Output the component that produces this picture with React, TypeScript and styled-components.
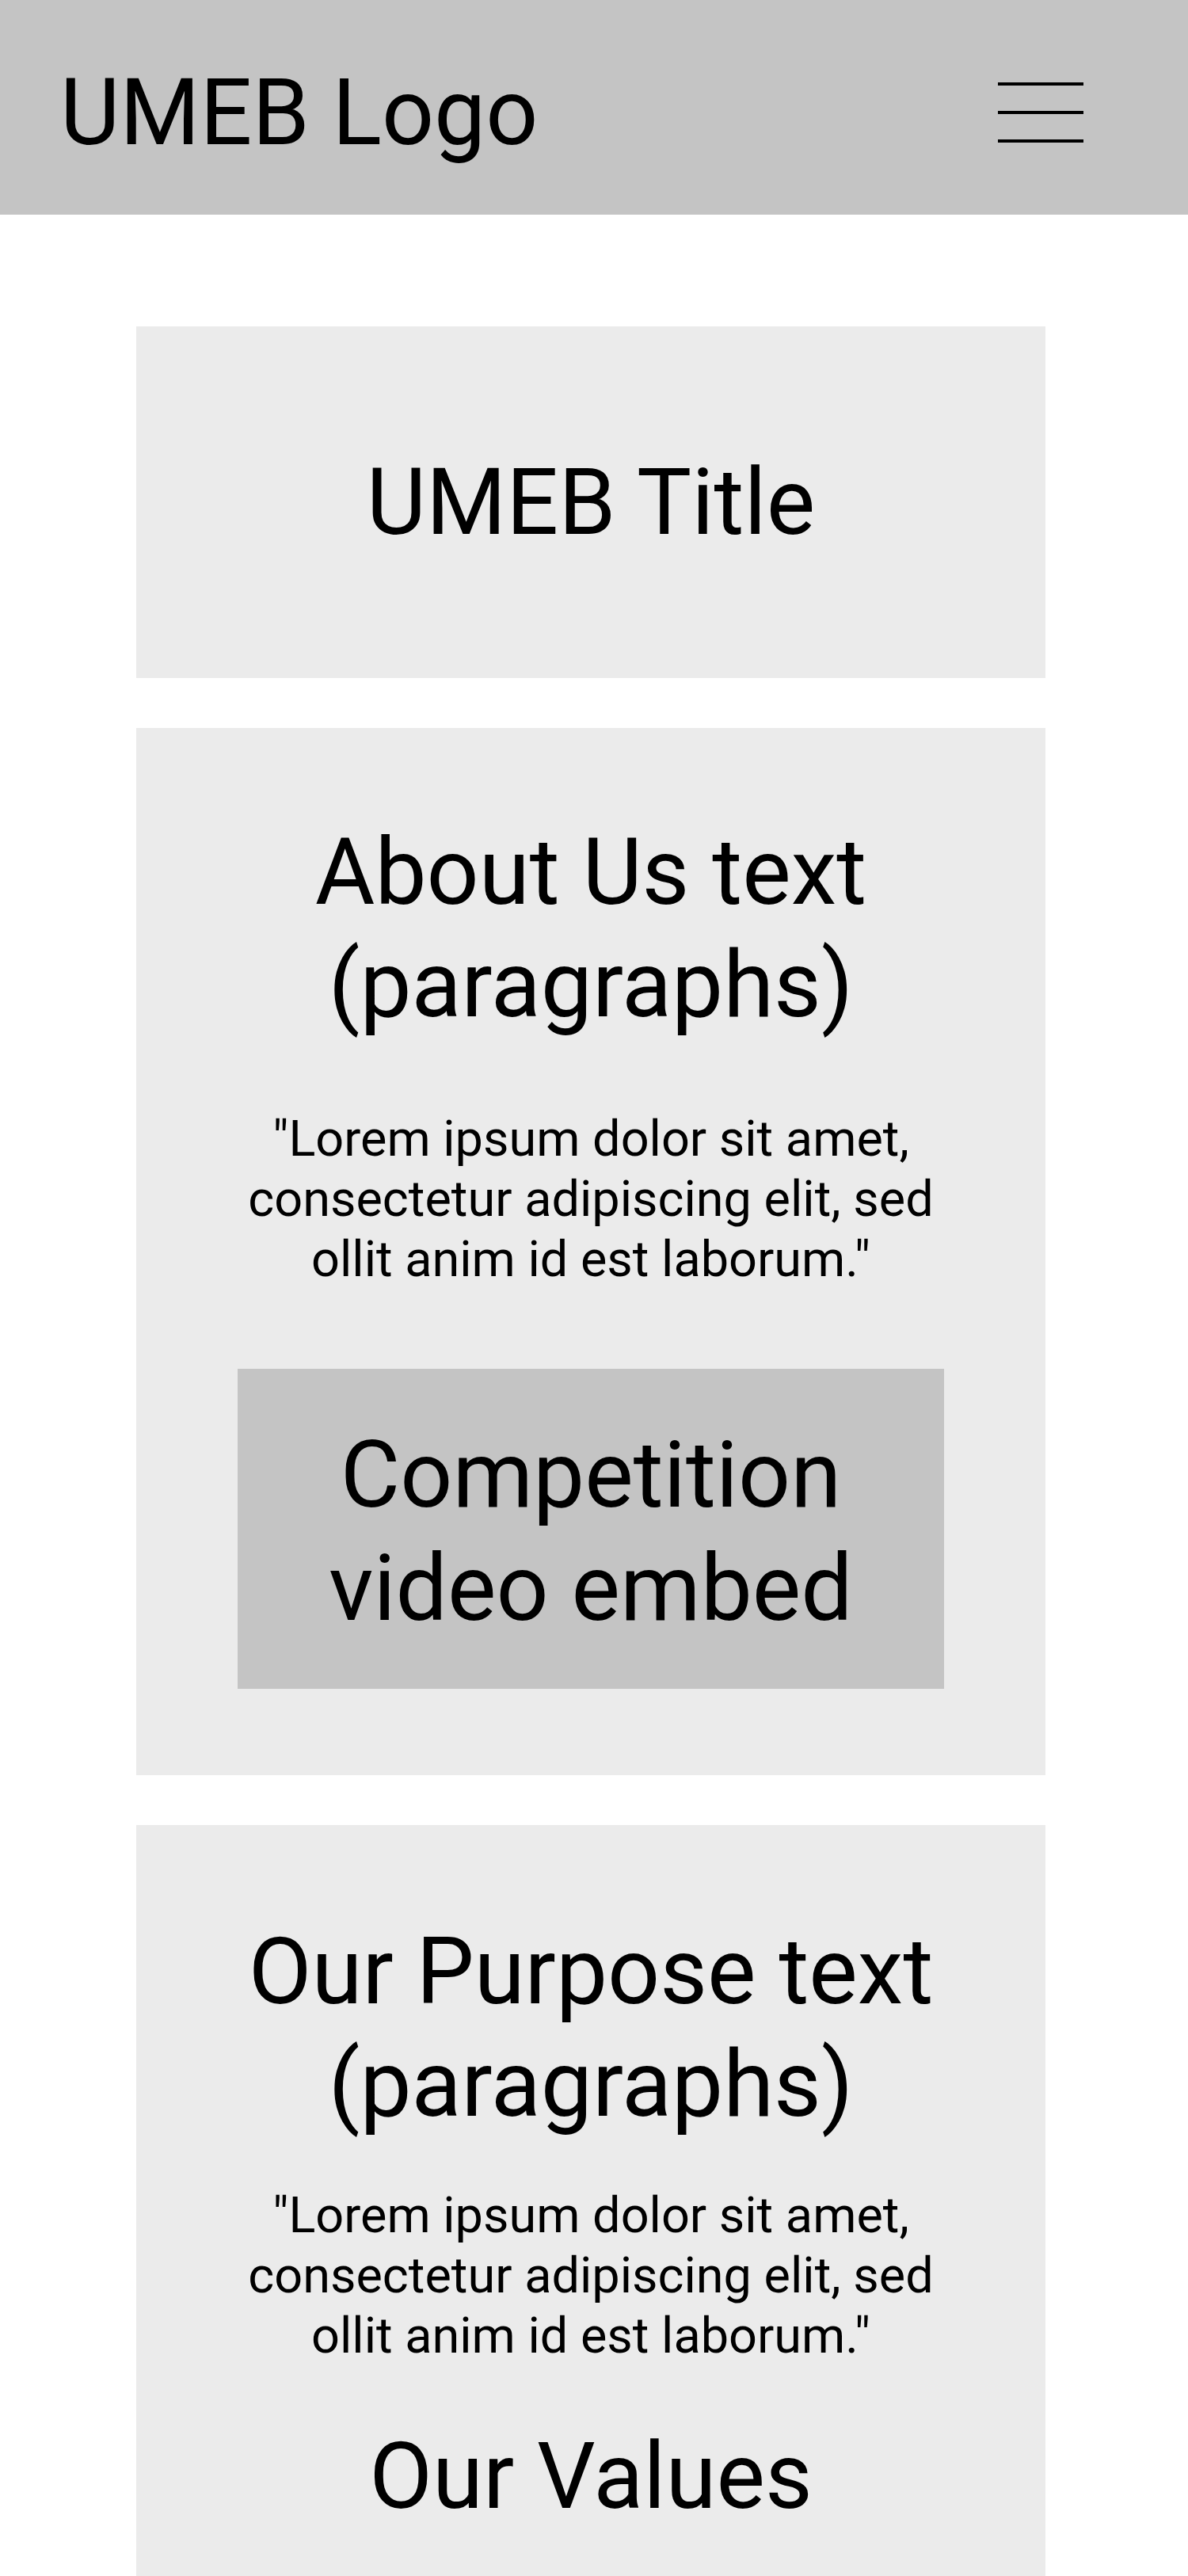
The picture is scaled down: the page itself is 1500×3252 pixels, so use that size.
import React from "react";
import styled, { createGlobalStyle } from "styled-components";

const GlobalStyle = createGlobalStyle`
    html, body {
        margin: 0;
        padding: 0;
        background: #ffffff;
    }
    body {
        font-family: Roboto, "Liberation Sans", Arial, sans-serif;
        color: #000000;
    }
    * {
        box-sizing: border-box;
    }
`;

const Header = styled.header`
    height: 271px;
    padding: 12px 132px 0 76px;
    background: #c4c4c4;
    display: flex;
    align-items: center;
    justify-content: space-between;
`;

const Logo = styled.div`
    font-size: 116px;
    line-height: 1;
    font-weight: 400;
`;

const MenuButton = styled.button`
    width: 108px;
    padding: 0;
    border: none;
    background: transparent;
    display: flex;
    flex-direction: column;
    gap: 32px;
    cursor: pointer;
`;

const MenuBar = styled.span`
    display: block;
    height: 4px;
    width: 100%;
    background: #000000;
`;

const Main = styled.main`
    width: 1148px;
    margin-left: 172px;
    padding-top: 141px;
    display: flex;
    flex-direction: column;
    gap: 63px;
`;

const Card = styled.section<{ $height?: number; $padTop?: number; $padBottom?: number }>`
    background: #ebebeb;
    display: flex;
    flex-direction: column;
    align-items: center;
    justify-content: ${(p) => (p.$height ? "center" : "flex-start")};
    text-align: center;
    height: ${(p) => (p.$height ? `${p.$height}px` : "auto")};
    padding-top: ${(p) => p.$padTop ?? 0}px;
    padding-bottom: ${(p) => p.$padBottom ?? 0}px;
`;

const Heading = styled.h2<{ $top?: number }>`
    margin: ${(p) => p.$top ?? 0}px 0 0;
    font-size: 116px;
    line-height: 142px;
    font-weight: 400;
`;

const Paragraph = styled.p<{ $top: number }>`
    margin: ${(p) => p.$top}px 0 0;
    width: 880px;
    font-size: 63px;
    line-height: 76px;
    font-weight: 400;
`;

const VideoEmbed = styled.div`
    margin-top: 100px;
    width: 892px;
    height: 404px;
    padding-top: 8px;
    background: #c4c4c4;
    display: flex;
    align-items: center;
    justify-content: center;
    font-size: 116px;
    line-height: 143px;
    text-align: center;
`;

const lorem = `"Lorem ipsum dolor sit amet, consectetur adipiscing elit, sed ollit anim id est laborum."`;

const App = () => {
    return (
        <>
            <GlobalStyle />
            <Header>
                <Logo>UMEB Logo</Logo>
                <MenuButton aria-label="Menu">
                    <MenuBar />
                    <MenuBar />
                    <MenuBar />
                </MenuButton>
            </Header>
            <Main>
                <Card $height={444}>
                    <Heading>UMEB Title</Heading>
                </Card>
                <Card $padTop={111} $padBottom={109}>
                    <Heading>
                        About Us text
                        <br />
                        (paragraphs)
                    </Heading>
                    <Paragraph $top={86}>{lorem}</Paragraph>
                    <VideoEmbed>
                        Competition
                        <br />
                        video embed
                    </VideoEmbed>
                </Card>
                <Card $padTop={114} $padBottom={120}>
                    <Heading>
                        Our Purpose text
                        <br />
                        (paragraphs)
                    </Heading>
                    <Paragraph $top={57}>{lorem}</Paragraph>
                    <Heading $top={68}>Our Values</Heading>
                </Card>
            </Main>
        </>
    );
};

export default App;
